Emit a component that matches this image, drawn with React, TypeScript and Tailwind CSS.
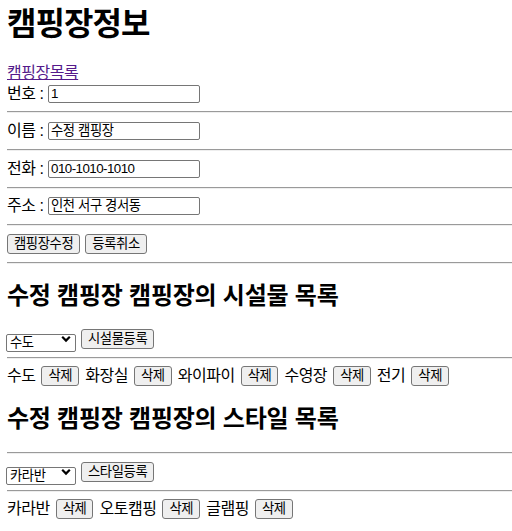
import { useState } from "react";

const KO = "tracking-[-0.03em]";

const Hr = ({ mt }: { mt: string }) => (
  <div
    className={`${mt} h-[2px] border-t border-t-[#9a9a9a] border-b border-b-[#eeeeee]`}
  />
);

const Btn = ({ label }: { label: string }) => (
  <button className="h-[20px] px-[6px] border border-[#767676] rounded-[3px] bg-[#efefef] text-[13.33px] leading-[18px] text-black">
    <span className={KO}>{label}</span>
  </button>
);

const Field = ({
  label,
  value,
  mt,
  latin,
}: {
  label: string;
  value: string;
  mt: string;
  latin?: boolean;
}) => (
  <div className={`${mt} h-[20px] flex items-center`}>
    <span className={`w-[41px] text-[16px] ${KO}`}>{label} :</span>
    <input
      className={`w-[152px] h-[18px] border border-[#767676] rounded-[2px] px-[2px] text-[13.33px] text-black ${
        latin ? "tracking-[-0.04em]" : KO
      }`}
      defaultValue={value}
    />
  </div>
);

const Chooser = ({ options, value }: { options: string[]; value: string }) => {
  const [v, setV] = useState(value);
  return (
    <div className="relative w-[70px] h-[18px] -ml-[1px]">
      <select
        className={`appearance-none w-full h-full border border-[#767676] rounded-[2px] pl-[3px] text-[13.33px] leading-[16px] text-black bg-white ${KO}`}
        value={v}
        onChange={(e) => setV(e.target.value)}
      >
        {options.map((o) => (
          <option key={o}>{o}</option>
        ))}
      </select>
      <svg
        className="absolute right-[5px] top-[5px] pointer-events-none"
        width="10"
        height="8"
        viewBox="0 0 10 8"
      >
        <path d="M1.2 1.8 L5 5.6 L8.8 1.8" fill="none" stroke="#000" strokeWidth="2.2" />
      </svg>
    </div>
  );
};

const Items = ({ names, mt }: { names: string[]; mt: string }) => (
  <div className={`${mt} h-[20px] flex items-center gap-[6px] text-[16px]`}>
    {names.map((n) => (
      <div key={n} className="flex items-center gap-[6px]">
        <span className={KO}>{n}</span>
        <Btn label="삭제" />
      </div>
    ))}
  </div>
);

const App = () => {
  const facilities = ["수도", "화장실", "와이파이", "수영장", "전기"];
  const styles = ["카라반", "오토캠핑", "글램핑"];

  return (
    <div
      className="pl-[7px] bg-white text-black min-h-[531px]"
      style={{ fontFamily: '"Liberation Sans", "Noto Sans CJK KR", sans-serif' }}
    >
      <h1 className={`h-[48px] leading-[48px] text-[32px] font-bold ${KO}`}>
        캠핑장정보
      </h1>
      <div className="mt-[14px] h-[22px] leading-[22px] text-[16px]">
        <a href="#" className={`text-[#551a8b] underline ${KO}`}>
          캠핑장목록
        </a>
      </div>
      <Field mt="mt-0" label="번호" value="1" latin />
      <Hr mt="mt-[7px]" />
      <Field mt="mt-[8px]" label="이름" value="수정 캠핑장" />
      <Hr mt="mt-[8px]" />
      <Field mt="mt-[8px]" label="전화" value="010-1010-1010" latin />
      <Hr mt="mt-[8px]" />
      <Field mt="mt-[7px]" label="주소" value="인천 서구 경서동" />
      <Hr mt="mt-[8px]" />
      <div className="mt-[8px] h-[20px] flex items-center gap-[5px]">
        <Btn label="캠핑장수정" />
        <Btn label="등록취소" />
      </div>
      <Hr mt="mt-[8px]" />

      <h2 className="mt-[16px] h-[32px] leading-[32px] text-[24px] font-bold tracking-[-0.01em]">
        수정 캠핑장 캠핑장의 시설물 목록
      </h2>
      <div className="mt-[17px] h-[20px] flex items-center gap-[5px]">
        <Chooser options={facilities} value="수도" />
        <Btn label="시설물등록" />
      </div>
      <Hr mt="mt-[8px]" />
      <Items mt="mt-[7px]" names={facilities} />

      <h2 className="mt-[17px] h-[32px] leading-[32px] text-[24px] font-bold tracking-[-0.01em]">
        수정 캠핑장 캠핑장의 스타일 목록
      </h2>
      <Hr mt="mt-[17px]" />
      <div className="mt-[8px] h-[20px] flex items-center gap-[5px]">
        <Chooser options={styles} value="카라반" />
        <Btn label="스타일등록" />
      </div>
      <Hr mt="mt-[8px]" />
      <Items mt="mt-[7px]" names={styles} />
    </div>
  );
};

export default App;
